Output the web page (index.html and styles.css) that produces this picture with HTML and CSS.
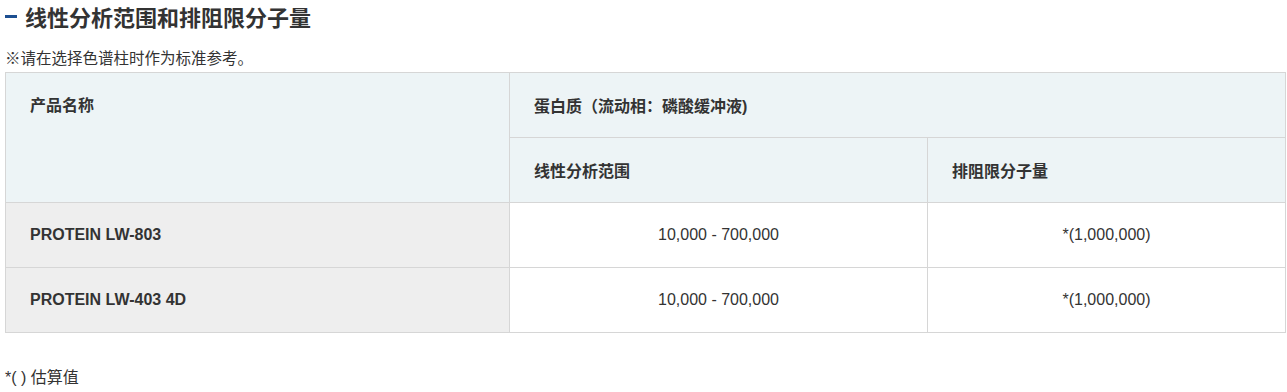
FILE: index.html
```html
<!DOCTYPE html>
<html lang="zh-CN">
<head>
<meta charset="utf-8">
<title>线性分析范围和排阻限分子量</title>
<link rel="stylesheet" href="styles.css">
</head>
<body>
<div class="page">
  <h2 class="title"><span class="dash"></span>线性分析范围和排阻限分子量</h2>
  <p class="note">※请在选择色谱柱时作为标准参考。</p>
  <table class="spec">
    <colgroup>
      <col class="c1"><col class="c2"><col class="c3">
    </colgroup>
    <thead>
      <tr>
        <th rowspan="2" class="top">产品名称</th>
        <th colspan="2">蛋白质（流动相：磷酸缓冲液)</th>
      </tr>
      <tr>
        <th>线性分析范围</th>
        <th>排阻限分子量</th>
      </tr>
    </thead>
    <tbody>
      <tr>
        <th class="name">PROTEIN LW-803</th>
        <td>10,000 - 700,000</td>
        <td>*(1,000,000)</td>
      </tr>
      <tr>
        <th class="name">PROTEIN LW-403 4D</th>
        <td>10,000 - 700,000</td>
        <td>*(1,000,000)</td>
      </tr>
    </tbody>
  </table>
  <p class="foot">*( ) 估算值</p>
</div>
</body>
</html>
```
FILE: styles.css
```css
html, body {
  margin: 0;
  padding: 0;
  background: #ffffff;
}
body {
  font-family: "Liberation Sans", "Noto Sans CJK SC", sans-serif;
  color: #333333;
}
.page {
  padding: 0 5px;
  width: 1280px;
}
.title {
  display: flex;
  align-items: center;
  margin: 0;
  height: 32px;
  font-size: 22px;
  font-weight: bold;
  color: #333333;
}
.dash {
  display: inline-block;
  width: 12px;
  height: 3px;
  background: #1d4f91;
  margin-right: 8px;
}
.note {
  margin: 16px 0 0;
  font-size: 15.5px;
  line-height: 22px;
  height: 24px;
}
.spec {
  width: 1280px;
  border-collapse: collapse;
  table-layout: fixed;
  font-size: 16px;
}
.c1 { width: 504px; }
.c2 { width: 418px; }
.c3 { width: 358px; }
.spec th, .spec td {
  border: 1px solid #d6d6d6;
  height: 65px;
  padding: 0 24px;
  box-sizing: border-box;
  vertical-align: middle;
}
.spec thead th {
  background: #edf4f6;
  text-align: left;
  font-weight: bold;
  font-size: 16px;
}
.spec thead th.top {
  vertical-align: top;
  padding-top: 19px;
}
.spec tbody th.name {
  background: #eeeeee;
  text-align: left;
  font-weight: bold;
  font-size: 16px;
}
.spec tbody td {
  text-align: center;
  font-size: 16px;
  color: #333333;
}
.foot {
  margin: 34px 0 0;
  font-size: 16px;
  line-height: 22px;
}
```
